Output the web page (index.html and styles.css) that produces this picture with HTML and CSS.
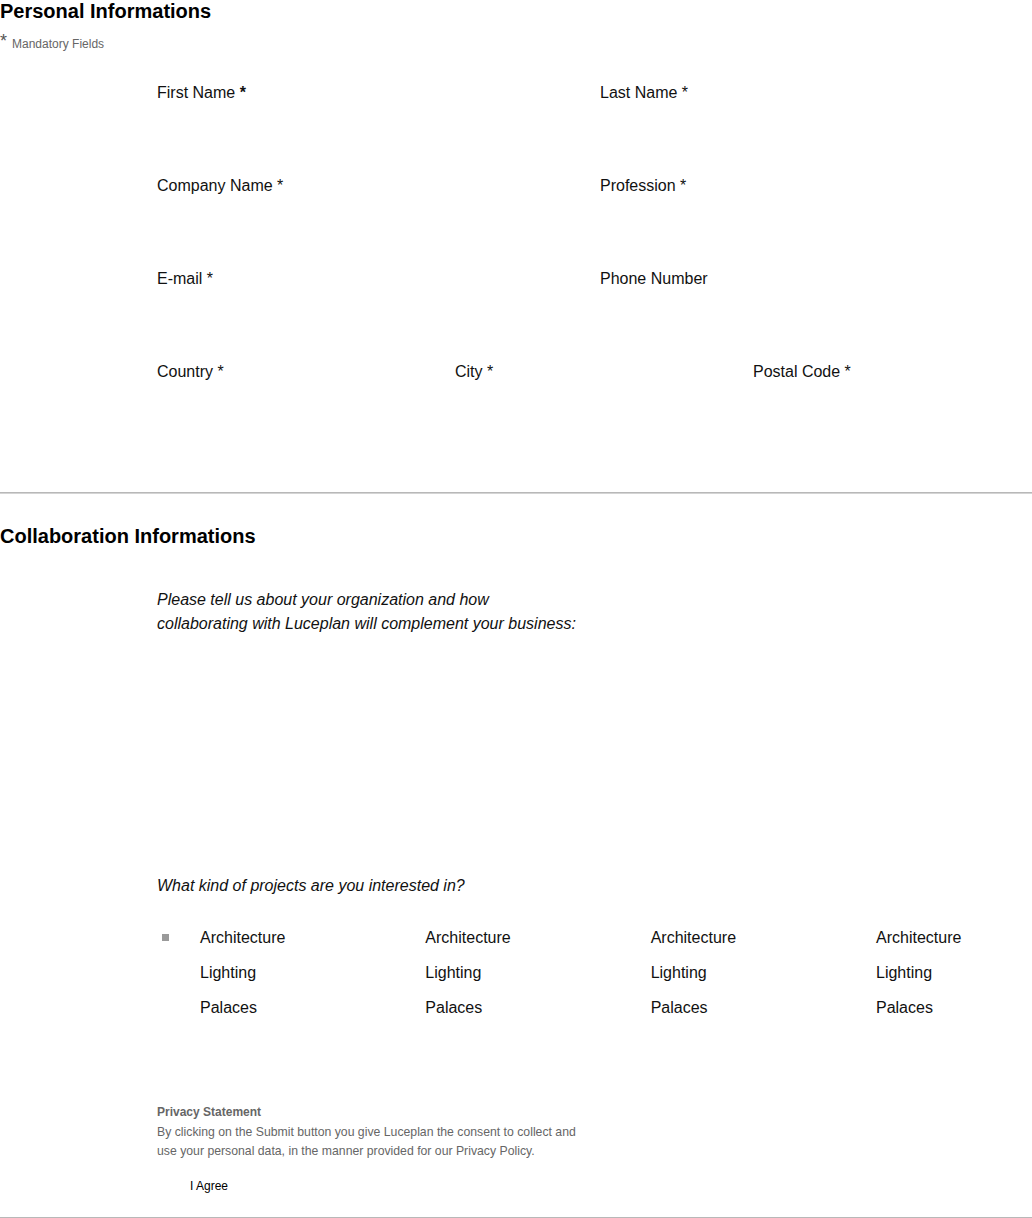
FILE: index.html
```html
<!DOCTYPE html>
<html lang="en">
<head>
<meta charset="utf-8">
<title>Form</title>
<link rel="stylesheet" href="styles.css">
</head>
<body>
<section class="section">
  <h2 class="title">Personal Informations</h2>
  <p class="mandatory"><span class="star">* </span>Mandatory Fields</p>
  <div class="fields">
    <div class="row row-2">
      <div class="field"><label class="label">First Name <b class="req">*</b></label></div>
      <div class="field"><label class="label">Last Name *</label></div>
    </div>
    <div class="row row-2">
      <div class="field"><label class="label">Company Name *</label></div>
      <div class="field"><label class="label">Profession *</label></div>
    </div>
    <div class="row row-2">
      <div class="field"><label class="label">E-mail *</label></div>
      <div class="field"><label class="label">Phone Number</label></div>
    </div>
    <div class="row row-3">
      <div class="field"><label class="label">Country *</label></div>
      <div class="field"><label class="label">City *</label></div>
      <div class="field"><label class="label">Postal Code *</label></div>
    </div>
  </div>
</section>
<hr class="divider divider-1">
<section class="section">
  <h2 class="title title-2">Collaboration Informations</h2>
  <div class="collab">
    <p class="question">Please tell us about your organization and how<br>collaborating with Luceplan will complement your business:</p>
    <div class="textarea-space"></div>
    <p class="question">What kind of projects are you interested in?</p>
    <div class="checks">
      <ul class="check-col">
        <li class="check"><span class="box"><span class="square"></span></span>Architecture</li>
        <li class="check"><span class="box"></span>Lighting</li>
        <li class="check"><span class="box"></span>Palaces</li>
      </ul>
      <ul class="check-col">
        <li class="check"><span class="box"></span>Architecture</li>
        <li class="check"><span class="box"></span>Lighting</li>
        <li class="check"><span class="box"></span>Palaces</li>
      </ul>
      <ul class="check-col">
        <li class="check"><span class="box"></span>Architecture</li>
        <li class="check"><span class="box"></span>Lighting</li>
        <li class="check"><span class="box"></span>Palaces</li>
      </ul>
      <ul class="check-col">
        <li class="check"><span class="box"></span>Architecture</li>
        <li class="check"><span class="box"></span>Lighting</li>
        <li class="check"><span class="box"></span>Palaces</li>
      </ul>
    </div>
    <div class="privacy">
      <p class="privacy-title">Privacy Statement</p>
      <p class="privacy-text">By clicking on the Submit button you give Luceplan the consent to collect and<br>use your personal data, in the manner provided for our Privacy Policy.</p>
      <p class="agree">I Agree</p>
    </div>
  </div>
</section>
<hr class="divider divider-2">
</body>
</html>
```

FILE: styles.css
```css
html, body {
  margin: 0;
  padding: 0;
  background: #fff;
}
body {
  font-family: "Liberation Sans", Arial, sans-serif;
  color: #111;
  width: 1032px;
  overflow: hidden;
}
.section {
  margin: 0;
}
.title {
  margin: 0;
  font-size: 20px;
  line-height: 23px;
  font-weight: bold;
  color: #000;
}
.title-2 {
  margin-top: 31px;
}
.mandatory {
  margin: 11px 0 0 0;
  font-size: 12px;
  line-height: 20px;
  color: #666;
}
.star {
  font-size: 18px;
  color: #555;
  vertical-align: top;
  line-height: 15px;
}
.fields {
  padding: 30px 0 0 157px;
}
.row {
  display: grid;
}
.row-2 {
  grid-template-columns: 443px 443px;
}
.row-3 {
  grid-template-columns: 298px 298px 298px;
}
.field {
  height: 93px;
}
.label {
  display: block;
  font-size: 16px;
  line-height: 18px;
  color: #111;
}
.req {
  font-weight: bold;
}
.divider {
  margin: 0;
  height: 0;
  border: 0;
  border-top: 1px solid #b8b8b8;
  border-bottom: 1px solid #d4d4d4;
}
.divider-1 {
  margin-top: 36px;
}
.divider-2 {
  margin-top: 21px;
}
.collab {
  padding: 40px 0 0 157px;
}
.question {
  margin: 0;
  font-size: 16px;
  line-height: 24px;
  font-style: italic;
  color: #111;
}
.q-first {
  letter-spacing: 0.07px;
}
.textarea-space {
  height: 238px;
}
.checks {
  display: grid;
  grid-template-columns: repeat(4, 225.33px);
  margin-top: 22px;
}
.check-col {
  list-style: none;
  margin: 0;
  padding: 0;
}
.check {
  display: flex;
  align-items: center;
  height: 35px;
  font-size: 16px;
  color: #111;
}
.box {
  display: flex;
  align-items: center;
  width: 43px;
  flex: none;
  padding-left: 5px;
  box-sizing: border-box;
}
.square {
  display: block;
  width: 7px;
  height: 7px;
  background: #9a9a9a;
}
.privacy {
  margin-top: 77px;
}
.privacy-title {
  margin: 0;
  font-size: 12px;
  line-height: 20px;
  font-weight: bold;
  color: #666;
}
.privacy-text {
  margin: 1px 0 0 0;
  font-size: 12.25px;
  line-height: 19px;
  color: #666;
}
.agree {
  margin: 15px 0 0 33px;
  font-size: 12px;
  line-height: 20px;
  color: #000;
}
```
